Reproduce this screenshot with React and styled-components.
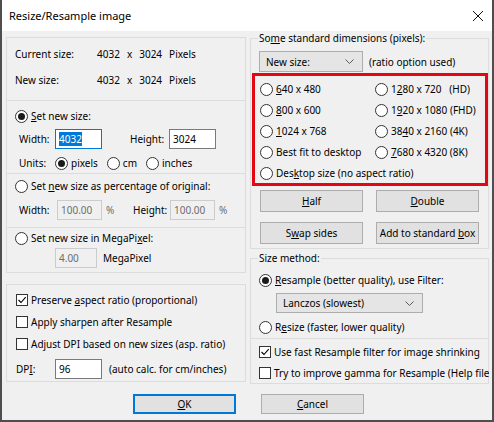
import React from 'react'
import styled, { createGlobalStyle } from 'styled-components'

const GlobalStyle = createGlobalStyle`
  html, body { margin: 0; padding: 0; background: #f0f0f0; }
  body { font-family: "Noto Sans", "Open Sans", sans-serif; font-size: 10px; color: #000; }
  * { box-sizing: border-box; }
`

const Radio = ({ checked }) => <RadioCircle $checked={checked} />

const Check = ({ checked }) => (
  <CheckBox>
    {checked && (
      <svg width="10" height="10" viewBox="0 0 10 10">
        <path d="M1.5 5 L4 7.5 L8.7 2.2" stroke="#000" strokeWidth="1.1" fill="none" />
      </svg>
    )}
  </CheckBox>
)

const Chevron = () => (
  <svg width="9" height="5" viewBox="0 0 9 5">
    <path d="M0.5 0.5 L4.5 4.5 L8.5 0.5" stroke="#5a5a5a" strokeWidth="1" fill="none" />
  </svg>
)

const App = () => {
  return (
    <>
      <GlobalStyle />
      <Window>
        <TitleBar>
          <Title>Resize/Resample image</Title>
          <svg width="10" height="10" viewBox="0 0 10 10">
            <path d="M0 0 L10 10 M10 0 L0 10" stroke="#111" strokeWidth="1" />
          </svg>
        </TitleBar>

        <Body>
          <LeftCol>
            <Panel>
              <Section $pad="8px 0 12px 8px" $gap={10}>
                <InfoRow>
                  <Label $w={82}>Current size:</Label>
                  <Values><span>4032</span><span>x</span><span>3024</span><span>Pixels</span></Values>
                </InfoRow>
                <InfoRow>
                  <Label $w={82}>New size:</Label>
                  <Values><span>4032</span><span>x</span><span>3024</span><span>Pixels</span></Values>
                </InfoRow>
              </Section>

              <Section $pad="7px 0 2px 8px">
                <Option><Radio checked /><span><U>S</U>et new size:</span></Option>
                <FieldRow $mt={5} $pl={4}>
                  <Label $w={36}>Width:</Label>
                  <Field $w={47} $focused><Sel>4032</Sel></Field>
                  <Label $w={39} $ml={28}>Height:</Label>
                  <Field $w={47}>3024</Field>
                </FieldRow>
                <FieldRow $mt={6} $pl={4} $h={16}>
                  <Label $w={36}>Units:</Label>
                  <OptionGroup>
                    <Option><Radio checked /><span>pixels</span></Option>
                    <Option><Radio /><span>cm</span></Option>
                    <Option><Radio /><span>inches</span></Option>
                  </OptionGroup>
                </FieldRow>
              </Section>

              <Section $pad="4px 0 7px 8px">
                <Option><Radio /><span>Set <U>n</U>ew size as percentage of original:</span></Option>
                <FieldRow $mt={6} $pl={4}>
                  <Label $w={38}>Width:</Label>
                  <Field $w={45} $disabled>100.00</Field>
                  <Label $w={27} $ml={4} $muted>%</Label>
                  <Label $w={37}>Height:</Label>
                  <Field $w={45} $disabled>100.00</Field>
                  <Label $w={10} $ml={4} $muted>%</Label>
                </FieldRow>
              </Section>

              <Section $pad="2px 0 4px 8px">
                <Option><Radio /><span>Set new size in MegaPi<U>x</U>el:</span></Option>
                <FieldRow $mt={2} $pl={40}>
                  <Field $w={42} $disabled>4.00</Field>
                  <Label $ml={6}>MegaPixel</Label>
                </FieldRow>
              </Section>
            </Panel>

            <Panel>
              <Section $pad="7px 0 2px 9px" $gap={6}>
                <Option><Check checked /><span>Preserve <U>a</U>spect ratio (proportional)</span></Option>
                <Option><Check /><span>Apply sharpen after Resample</span></Option>
                <Option><Check /><span>Adjust DPI based on new sizes (asp. ratio)</span></Option>
                <FieldRow $mt={1}>
                  <Label $w={39}>DP<U>I</U>:</Label>
                  <Field $w={47}>96</Field>
                  <Label $ml={7}>(auto calc. for cm/inches)</Label>
                </FieldRow>
              </Section>
            </Panel>
          </LeftCol>

          <RightCol>
            <Group $pb={4}>
              <Legend>So<U>m</U>e standard dimensions (pixels):</Legend>
              <DropRow>
                <Select $w={104}><span>New size:</span><Chevron /></Select>
                <span>(ratio option used)</span>
              </DropRow>
              <Highlight>
                <Option><Radio /><span><U>6</U>40 x 480</span></Option>
                <Option><Radio /><span>1<U>2</U>80 x 720&nbsp;&nbsp;&nbsp;(HD)</span></Option>
                <Option><Radio /><span><U>8</U>00 x 600</span></Option>
                <Option><Radio /><span>1<U>9</U>20 x 1080 (FHD)</span></Option>
                <Option><Radio /><span><U>1</U>024 x 768</span></Option>
                <Option><Radio /><span>38<U>4</U>0 x 2160 (4K)</span></Option>
                <Option><Radio /><span>Best fit to desktop</span></Option>
                <Option><Radio /><span><U>7</U>680 x 4320 (8K)</span></Option>
                <Option $span><Radio /><span>Des<U>k</U>top size (no aspect ratio)</span></Option>
              </Highlight>
              <ButtonGrid>
                <Button><U>H</U>alf</Button>
                <Button><U>D</U>ouble</Button>
                <Button>S<U>w</U>ap sides</Button>
                <Button>Add to standard <U>b</U>ox</Button>
              </ButtonGrid>
            </Group>

            <Group $pb={2}>
              <Legend>Size method:</Legend>
              <Option $mt={7}><Radio checked /><span><U>R</U>esample (better quality), use Filter:</span></Option>
              <Select $w={147} $h={20} $ml={17} $mt={5}><span>Lanczos (slowest)</span><Chevron /></Select>
              <Option $mt={6}><Radio /><span>R<U>e</U>size (faster, lower quality)</span></Option>
              <Divider />
              <Option $mt={5}><Check checked /><span>Use fast Resample filter for image shrinking</span></Option>
              <Option $mt={5} $clip><Check /><span>Try to improve gamma for Resample (Help file</span></Option>
            </Group>
          </RightCol>
        </Body>

        <Footer>
          <Button $w={103} $h={20} $default><U>O</U>K</Button>
          <Button $w={103} $h={20}><U>C</U>ancel</Button>
        </Footer>
      </Window>
    </>
  )
}

export default App

const Window = styled.div`
  width: 494px;
  height: 422px;
  background: #f0f0f0;
  border: 2px solid #4e4e4e;
  border-top: none;
  display: flex;
  flex-direction: column;
  overflow: hidden;
`
const TitleBar = styled.div`
  height: 31px;
  flex-shrink: 0;
  background: #fff;
  display: flex;
  align-items: center;
  justify-content: space-between;
  padding: 0 9px 0 7px;
`
const Title = styled.span`
  font-size: 11px;
`
const Body = styled.div`
  display: grid;
  grid-template-columns: 240px 239px;
  column-gap: 4px;
  padding-left: 4px;
  align-items: start;
`
const LeftCol = styled.div`
  display: flex;
  flex-direction: column;
  gap: 11px;
  padding-top: 6px;
`
const RightCol = styled.div`
  display: flex;
  flex-direction: column;
  gap: 2px;
`
const Panel = styled.div`
  border: 1px solid #dcdcdc;
`
const Section = styled.div`
  display: flex;
  flex-direction: column;
  gap: ${p => p.$gap || 0}px;
  padding: ${p => p.$pad};
  & + & {
    border-top: 1px solid #dcdcdc;
  }
`
const InfoRow = styled.div`
  display: flex;
  align-items: center;
  height: 16px;
`
const Values = styled.div`
  display: flex;
  gap: 7px;
`
const Label = styled.span`
  display: inline-block;
  width: ${p => (p.$w ? p.$w + 'px' : 'auto')};
  margin-left: ${p => p.$ml || 0}px;
  color: ${p => (p.$muted ? '#6d6d6d' : '#000')};
  white-space: nowrap;
  flex-shrink: 0;
`
const U = styled.span`
  text-decoration: underline;
  text-underline-offset: 1px;
`
const RadioCircle = styled.span`
  width: 13px;
  height: 13px;
  flex-shrink: 0;
  border-radius: 50%;
  border: 1px solid #333;
  background: #fff;
  display: inline-flex;
  align-items: center;
  justify-content: center;
  &::after {
    content: '';
    width: 7px;
    height: 7px;
    border-radius: 50%;
    background: #1a1a1a;
    display: ${p => (p.$checked ? 'block' : 'none')};
  }
`
const CheckBox = styled.span`
  width: 12px;
  height: 12px;
  flex-shrink: 0;
  border: 1px solid #333;
  background: #fff;
  display: inline-flex;
  align-items: center;
  justify-content: center;
`
const Option = styled.div`
  display: flex;
  align-items: center;
  gap: 3px;
  height: 16px;
  margin-top: ${p => p.$mt || 0}px;
  white-space: nowrap;
  grid-column: ${p => (p.$span ? '1 / span 2' : 'auto')};
  overflow: ${p => (p.$clip ? 'hidden' : 'visible')};
  margin-right: ${p => (p.$clip ? '-2px' : '0')};
`
const OptionGroup = styled.div`
  display: flex;
  gap: 9px;
`
const FieldRow = styled.div`
  display: flex;
  align-items: center;
  height: ${p => p.$h || 20}px;
  margin-top: ${p => p.$mt || 0}px;
  padding-left: ${p => p.$pl || 0}px;
`
const Field = styled.div`
  width: ${p => p.$w}px;
  height: 20px;
  flex-shrink: 0;
  display: flex;
  align-items: center;
  padding: 0 3px;
  background: ${p => (p.$disabled ? '#f0f0f0' : '#fff')};
  border: 1px solid ${p => (p.$focused ? '#0078d7' : p.$disabled ? '#cccccc' : '#7a7a7a')};
  color: ${p => (p.$disabled ? '#6d6d6d' : '#000')};
`
const Sel = styled.span`
  background: #0078d7;
  color: #fff;
`
const Group = styled.fieldset`
  margin: 0;
  min-width: 0;
  border: 1px solid #dcdcdc;
  padding: 0 0 ${p => p.$pb}px 8px;
  display: flex;
  flex-direction: column;
  align-items: flex-start;
`
const Legend = styled.legend`
  padding: 0 1px;
  margin-left: -1px;
  line-height: 14px;
  white-space: nowrap;
`
const DropRow = styled.div`
  display: flex;
  align-items: center;
  gap: 6px;
  margin-top: 6px;
`
const Select = styled.div`
  width: ${p => p.$w}px;
  height: ${p => p.$h || 21}px;
  margin-left: ${p => p.$ml || 0}px;
  margin-top: ${p => p.$mt || 0}px;
  display: flex;
  align-items: center;
  justify-content: space-between;
  padding: 0 8px 0 6px;
  background: #e5e5e5;
  border: 1px solid #adadad;
`
const Highlight = styled.div`
  margin: 1px 0 0 -7px;
  width: 236px;
  border: 3px solid #e30613;
  padding: 5px 0 2px 5px;
  display: grid;
  grid-template-columns: 115px 1fr;
  row-gap: 5px;
`
const ButtonGrid = styled.div`
  display: grid;
  grid-template-columns: 103px 103px;
  column-gap: 13px;
  row-gap: 10px;
  margin-top: 4px;
  padding-left: 1px;
`
const Button = styled.button`
  width: ${p => (p.$w ? p.$w + 'px' : 'auto')};
  height: ${p => p.$h || 22}px;
  padding: 0;
  font: inherit;
  color: #000;
  background: #e1e1e1;
  border: 1px solid ${p => (p.$default ? '#0078d7' : '#adadad')};
  box-shadow: ${p => (p.$default ? 'inset 0 0 0 1px #0078d7' : 'none')};
  white-space: nowrap;
`
const Divider = styled.div`
  align-self: stretch;
  height: 1px;
  background: #dcdcdc;
  margin: 3px 0 0 -9px;
`
const Footer = styled.div`
  display: flex;
  gap: 25px;
  padding: 10px 0 0 131px;
`
